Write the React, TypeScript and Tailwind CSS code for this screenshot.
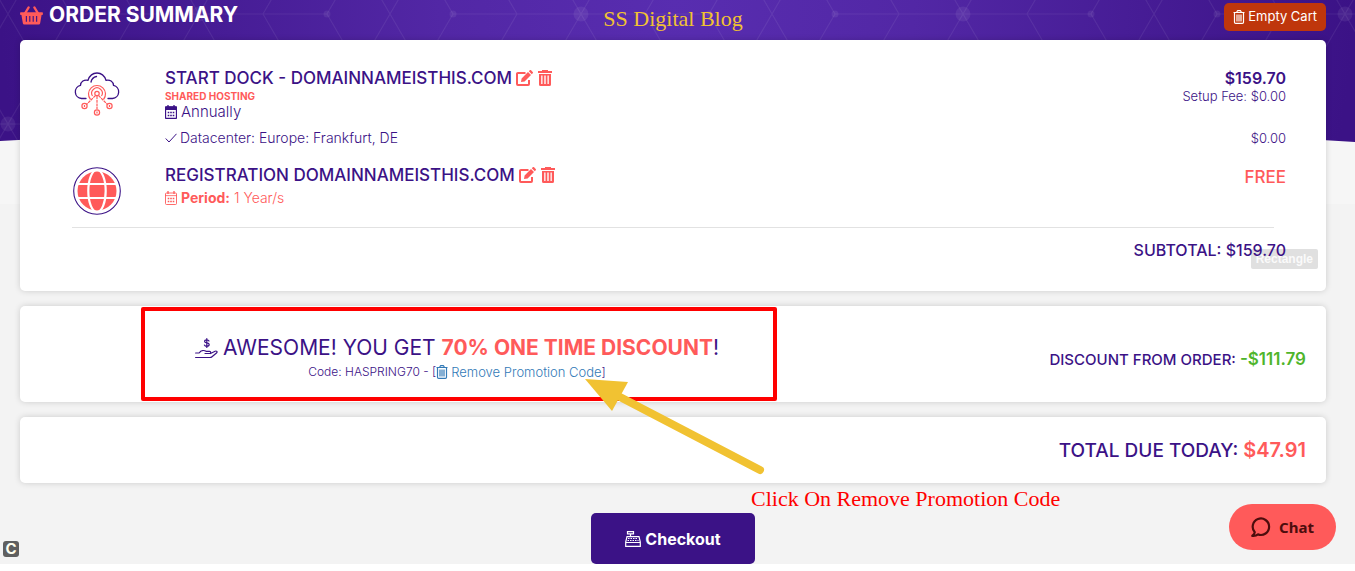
import React from "react";

type IconProps = { className?: string };

function BasketIcon({ className }: IconProps) {
  return (
    <svg viewBox="0 0 24 20" className={className} aria-hidden="true">
      <path d="M9 1.500 5 8M15 1.500 19 8" fill="none" stroke="currentColor" strokeWidth="2.400" strokeLinecap="round" />
      <path
        fillRule="evenodd"
        fill="currentColor"
        d="M.8 6.500h22.400a.8.8 0 0 1 .8.800v1.400a.8.8 0 0 1-.8.800h-.6l-1.500 8.700a1.600 1.600 0 0 1-1.600 1.300h-15a1.600 1.600 0 0 1-1.600-1.300L1.400 9.500H.8A.8.800 0 0 1 0 8.700V7.300a.8.800 0 0 1 .8-.8zM6 10.500v6h1.200v-6zM9.600 10.500v6h1.200v-6zM13.200 10.500v6h1.200v-6zM16.800 10.500v6H18v-6z"
      />
    </svg>
  );
}

function TrashIcon({ className }: IconProps) {
  return (
    <svg viewBox="0 0 14 16" className={className} aria-hidden="true">
      <path
        fillRule="evenodd"
        fill="currentColor"
        d="M4 0h6v1h4v2H0V1h4zM1 4h12v10.500a1.500 1.500 0 0 1-1.500 1.500h-9A1.500 1.500 0 0 1 1 14.500zM3.200 5.500V14h1.300V5.500zM6.300 5.500V14h1.400V5.500zM9.500 5.500V14h1.300V5.500z"
      />
    </svg>
  );
}

function TrashOutlineIcon({ className }: IconProps) {
  return (
    <svg viewBox="0 0 12 14" className={className} fill="none" stroke="currentColor" strokeWidth="1.200" strokeLinejoin="round" aria-hidden="true">
      <path d="M.5 2.500h11M3.500 2.500 4.500.7h3l1 1.800M1.500 2.500v9.700a1.200 1.200 0 0 0 1.200 1.200h6.600a1.200 1.200 0 0 0 1.200-1.200V2.500M4 4.500v7M6 4.500v7M8 4.500v7" />
    </svg>
  );
}

function EditIcon({ className }: IconProps) {
  return (
    <svg viewBox="0 0 18 16" className={className} aria-hidden="true">
      <path d="M9.500 3H1.900A.9.900 0 0 0 1 3.900v10.200a.9.900 0 0 0 .9.900h10.200a.9.900 0 0 0 .9-.9V10" fill="none" stroke="currentColor" strokeWidth="2" />
      <path d="M5 12l.6-3.600L12 2l3 3-6.400 6.400zM12.800 1.200l.9-.9a1 1 0 0 1 1.400 0l1.600 1.600a1 1 0 0 1 0 1.400l-.9.900z" fill="currentColor" />
    </svg>
  );
}

function CalendarIcon({ className, bold }: IconProps & { bold?: boolean }) {
  return (
    <svg viewBox="0 0 12 14" className={className} aria-hidden="true">
      <rect x=".5" y="2" width="11" height="11.500" rx="1" fill="none" stroke="currentColor" strokeWidth={bold ? 1.3 : 0.9} />
      <path d={bold ? "M0 1.500h12V5H0z" : "M0 4.300h12v.8H0z"} fill="currentColor" />
      <path d="M3 0v3M9 0v3" stroke="currentColor" strokeWidth="1.300" />
      <path d="M2.700 7.500h1.600M5.200 7.500h1.600M7.700 7.500h1.600M2.700 10.500h1.600M5.200 10.500h1.600M7.700 10.500h1.600" stroke="currentColor" strokeWidth="1.500" />
    </svg>
  );
}

function CloudIcon() {
  return (
    <svg viewBox="0 0 46 44" className="h-11 w-[46px]" fill="none" aria-hidden="true">
      <g stroke="#3b1286" strokeWidth="1.300" strokeLinecap="round">
        <path d="M12 26.500H7.500a6.700 6.700 0 0 1-1-13.200c.3-3.600 3.500-6 7.500-5C15.500 3.800 19 1 23 1s7.500 2.800 9 7.300c4-1 7.200 1.400 7.500 5a6.700 6.700 0 0 1-1 13.200H34" />
        <path d="M17 10c.6-3 2.800-5 5.500-5.500" />
      </g>
      <g stroke="#ff5a5a" strokeWidth="1.200">
        <path d="M16.500 27.500a8.500 8.500 0 1 1 13 0" />
        <path d="M18.500 24a5.300 5.300 0 1 1 9 0" />
        <circle cx="23" cy="21.500" r="2.200" />
        <path d="M21.500 23.500 12.500 32.500M24.500 23.500l9 9M23 24v13" strokeDasharray="3 .7" />
        <circle cx="10.500" cy="34" r="2.600" />
        <circle cx="35.500" cy="34" r="2.600" />
        <circle cx="23" cy="40.500" r="2.600" />
        <path d="M10.500 33v2M35.500 33v2M23 39.500v2" />
      </g>
    </svg>
  );
}

function GlobeIcon() {
  return (
    <svg viewBox="0 0 48 48" className="size-12" fill="none" aria-hidden="true">
      <circle cx="24" cy="24" r="23.300" stroke="#3b1286" strokeWidth="1.100" />
      <circle cx="24" cy="24" r="19.500" fill="#ff5a5a" />
      <g stroke="#fff" strokeWidth="2.200">
        <ellipse cx="24" cy="24" rx="8.700" ry="21" />
        <path d="M3 17h42M3 31h42" />
      </g>
    </svg>
  );
}

function HandIcon({ className }: IconProps) {
  return (
    <svg viewBox="0 0 23 21" className={className} fill="none" stroke="currentColor" strokeWidth="1.200" strokeLinecap="round" aria-hidden="true">
      <path d="M14 3c-.5-1-1.300-1.200-2.200-1.200-1.300 0-2.200.6-2.200 1.600 0 2.200 4.600.9 4.600 3.200 0 1.100-1 1.700-2.400 1.700-1 0-2-.4-2.400-1.300M11.800.6v8.800" />
      <path d="M.6 15h3.500c2-2.600 5-3 7-1.700h3.500c1.500 0 1.500 2.200 0 2.200H10M15.500 15.500l4.600-2.300c1.500-.7 2.600.8 1.400 1.800l-4.500 3.800c-.7.600-1.400.7-2.200.7H.6" />
    </svg>
  );
}

function RegisterIcon({ className }: IconProps) {
  return (
    <svg viewBox="0 0 16 16" className={className} fill="none" stroke="currentColor" aria-hidden="true">
      <path d="M2.500.6h6v2.300h-6zM5.500 3v2.500M2 5.600h12l1.300 5.500v4.300H.7v-4.300zM.7 11.500h14.600" strokeWidth="1.200" />
      <path d="M3 7.500h10M2.500 9.500h11" strokeWidth="1.200" strokeDasharray="1.500 1" />
    </svg>
  );
}

const columns = [0, 1, 2, 3];

function PatternRow({ shift, y }: { shift: number; y: number }) {
  return (
    <g transform={`translate(${shift} ${y})`}>
      {columns.map((c) => (
        <g key={c} transform={`translate(${c * 382} 0)`}>
          <path d="M-32-55 32 55M32-55-32 55M31-55 63 0 31 55M95-55 127 0 95 55M159-55l64 110M223-55 159 55M287-55 255 0l32 55M351-55 319 0l32 55M63 0h256" fill="none" stroke="#fff" strokeOpacity=".07" strokeWidth="1.200" />
          <g fill="#fff" fillOpacity=".07">
            <circle cx="63" cy="0" r="3.500" />
            <circle cx="191" cy="0" r="7.500" />
            <circle cx="319" cy="0" r="3.500" />
          </g>
        </g>
      ))}
    </g>
  );
}

function Backdrop() {
  return (
    <div className="absolute inset-x-0 top-0 h-51 bg-[#f6f6f6]">
      <svg viewBox="0 0 1355 142" preserveAspectRatio="none" className="h-[142px] w-full" aria-hidden="true">
        <defs>
          <radialGradient id="banner" gradientUnits="userSpaceOnUse" cx="677" cy="0" r="677">
            <stop offset="0" stopColor="#582db0" />
            <stop offset=".35" stopColor="#5227a5" />
            <stop offset="1" stopColor="#3b1286" />
          </radialGradient>
          <clipPath id="curve">
            <path d="M0 0h1355v142Q677 100 0 141z" />
          </clipPath>
        </defs>
        <g clipPath="url(#curve)">
          <rect width="1355" height="142" fill="url(#banner)" />
          <PatternRow shift={8} y={14} />
          <PatternRow shift={-183} y={124} />
        </g>
      </svg>
    </div>
  );
}

const card = "relative rounded-[5px] bg-white shadow-[0_0_6px_rgba(0,0,0,0.16)]";

function ItemActions({ item }: { item: string }) {
  return (
    <span className="flex gap-1 text-[#ff5a5a]">
      <button aria-label={`Edit ${item}`}><EditIcon className="h-4 w-[18px]" /></button>
      <button aria-label={`Remove ${item}`}><TrashIcon className="h-4 w-[14px]" /></button>
    </span>
  );
}

export default function App() {
  return (
    <div className="relative bg-[#f3f3f3] pr-[29px] pl-5 font-['Inter',sans-serif] text-[#3b1286]">
      <Backdrop />
      <header className="relative flex items-start justify-between pt-[3px] pb-[9px]">
        <h1 className="flex items-center gap-[6px] text-[21px] leading-6 font-bold text-white">
          <BasketIcon className="h-[19px] w-[23px] text-[#ff5a5a]" />
          ORDER SUMMARY
        </h1>
        <p className="absolute top-[3px] left-1/2 -translate-x-1/2 font-['Liberation_Serif',serif] text-[22px] leading-8 text-[#f1c232]">
          SS Digital Blog
        </p>
        <button className="flex h-7 items-center gap-[3px] rounded-[5px] bg-[#bf360c] px-[9px] text-[13px] text-white">
          <TrashOutlineIcon className="h-[14px] w-3" />
          Empty Cart
        </button>
      </header>

      <main className="relative">
        <section className={`${card} pt-7 pr-10 pb-[31px] pl-[52px]`}>
          <span className="absolute top-[209px] right-2 rounded-[2px] bg-[#e0e0e0] px-[5px] font-['Liberation_Sans',sans-serif] text-[12px] leading-5 font-bold text-[#fafafa]">
            Rectangle
          </span>
          <article className="flex">
            <div className="flex w-[93px] shrink-0 items-start pt-1 pl-[2px]"><CloudIcon /></div>
            <div className="flex-1">
              <div className="flex justify-between leading-5">
                <h2 className="flex items-center gap-1 text-[17px] font-medium">
                  START DOCK - DOMAINNAMEISTHIS.COM
                  <ItemActions item="Start Dock" />
                </h2>
                <p className="text-[16px] font-semibold">$159.70</p>
              </div>
              <div className="flex justify-between leading-4">
                <p className="text-[10px] font-bold text-[#ff5a5a]">SHARED HOSTING</p>
                <p className="text-[13px] font-light">Setup Fee: $0.00</p>
              </div>
              <p className="flex items-center gap-1 text-[15px] leading-4 font-light">
                <CalendarIcon bold className="h-[14px] w-3" />
                Annually
              </p>
              <div className="mt-2 flex justify-between text-[14px] leading-5 font-light">
                <p className="flex items-center gap-[3px]">
                  <svg viewBox="0 0 12 10" className="h-[10px] w-3" fill="none" stroke="currentColor" aria-hidden="true"><path d="m.7 5.500 3.300 3.500L11.500.8" /></svg>
                  Datacenter: Europe: Frankfurt, DE
                </p>
                <p className="text-[13px]">$0.00</p>
              </div>
            </div>
          </article>

          <article className="mt-[17px] flex">
            <div className="w-[93px] shrink-0 pt-[2px] pl-px"><GlobeIcon /></div>
            <div className="flex-1">
              <div className="flex items-start justify-between leading-5">
                <h2 className="flex items-center gap-1 text-[17px] font-medium">
                  REGISTRATION DOMAINNAMEISTHIS.COM
                  <ItemActions item="domain registration" />
                </h2>
                <p className="pt-[2px] text-[17px] font-medium text-[#ff5a5a]">FREE</p>
              </div>
              <p className="mt-px flex items-center gap-1 text-[14px] leading-5 font-light text-[#ff5a5a]">
                <CalendarIcon className="h-[14px] w-3" />
                <strong className="font-bold">Period:</strong> 1 Year/s
              </p>
            </div>
          </article>

          <hr className="mt-3 mr-3 border-[#e2e2e2]" />
          <p className="relative mt-3 text-right text-[16px] leading-5 font-medium">SUBTOTAL: $159.70</p>
        </section>

        <section className={`${card} mt-[15px] flex items-center justify-between py-px pr-5 pl-[121px]`}>
          <div className="w-[636px] rounded-[2px] border-4 border-[#ff0000] pt-[25px] pr-1 pb-[17px] text-center">
            <h2 className="flex items-center justify-center gap-[5px] text-[21px] leading-6">
              <HandIcon className="h-[21px] w-[23px]" />
              <span>AWESOME! YOU GET <strong className="font-bold text-[#ff5a5a]">70% ONE TIME DISCOUNT</strong>!</span>
            </h2>
            <p className="mt-1 flex items-center justify-center text-[12px] leading-4 font-light whitespace-pre">
              Code: HASPRING70 - [
              <a href="#remove" className="flex items-center gap-[3px] text-[13px] text-[#337ab7]">
                <TrashOutlineIcon className="h-[14px] w-3" />
                Remove Promotion Code
              </a>
              ]
            </p>
          </div>
          <p className="pt-3 text-[15px] leading-6 font-medium">
            DISCOUNT FROM ORDER: <strong className="text-[17px] leading-none font-semibold text-[#4fb52b]">-$111.79</strong>
          </p>
          <svg viewBox="0 0 182 98" className="pointer-events-none absolute top-[71px] left-[564px] z-10 h-[98px] w-[182px]" aria-hidden="true">
            <path d="M36 20 176 93" stroke="#f1c232" strokeWidth="8" strokeLinecap="round" />
            <path d="M1 2 44 5 28 34z" fill="#f1c232" />
          </svg>
        </section>

        <section className={`${card} mt-[15px] pt-[22px] pr-5 pb-5`}>
          <p className="text-right text-[19px] leading-6 font-medium">
            TOTAL DUE TODAY: <strong className="text-[20px] leading-none font-semibold text-[#ff5a5a]">$47.91</strong>
          </p>
        </section>

        <div className="relative mt-[30px] flex justify-center">
          <button className="flex h-[51px] w-[164px] items-center justify-center gap-1 rounded-[5px] bg-[#3b1286] text-[16px] font-bold text-white">
            <RegisterIcon className="size-4" />
            Checkout
          </button>
          <p className="absolute -top-[30px] left-[731px] font-['Liberation_Serif',serif] text-[22px] leading-8 whitespace-nowrap text-[#ff0000]">
            Click On Remove Promotion Code
          </p>
        </div>
      </main>

      <span className="absolute bottom-[7px] left-[3px] flex size-4 items-center justify-center rounded-[3px] bg-[#5f5f5f] text-[15px] leading-4 font-bold text-[#fffff0]">
        C
      </span>
      <button className="absolute right-[19px] bottom-[14px] flex h-[46px] w-[107px] items-center justify-center gap-2 rounded-full bg-[#ff5a5a] font-['Noto_Sans',sans-serif] text-[15px] font-bold text-[#4d0d0d]">
        <svg viewBox="0 0 20 20" className="size-5" fill="none" stroke="currentColor" strokeWidth="2.200" strokeLinejoin="round" aria-hidden="true">
          <path d="M3.800 15.200A8.200 8.200 0 1 1 7 17.400C5.500 18.600 3.500 19.100 1.300 18.800c1.400-.8 2.300-2 2.500-3.600z" />
        </svg>
        Chat
      </button>
    </div>
  );
}
